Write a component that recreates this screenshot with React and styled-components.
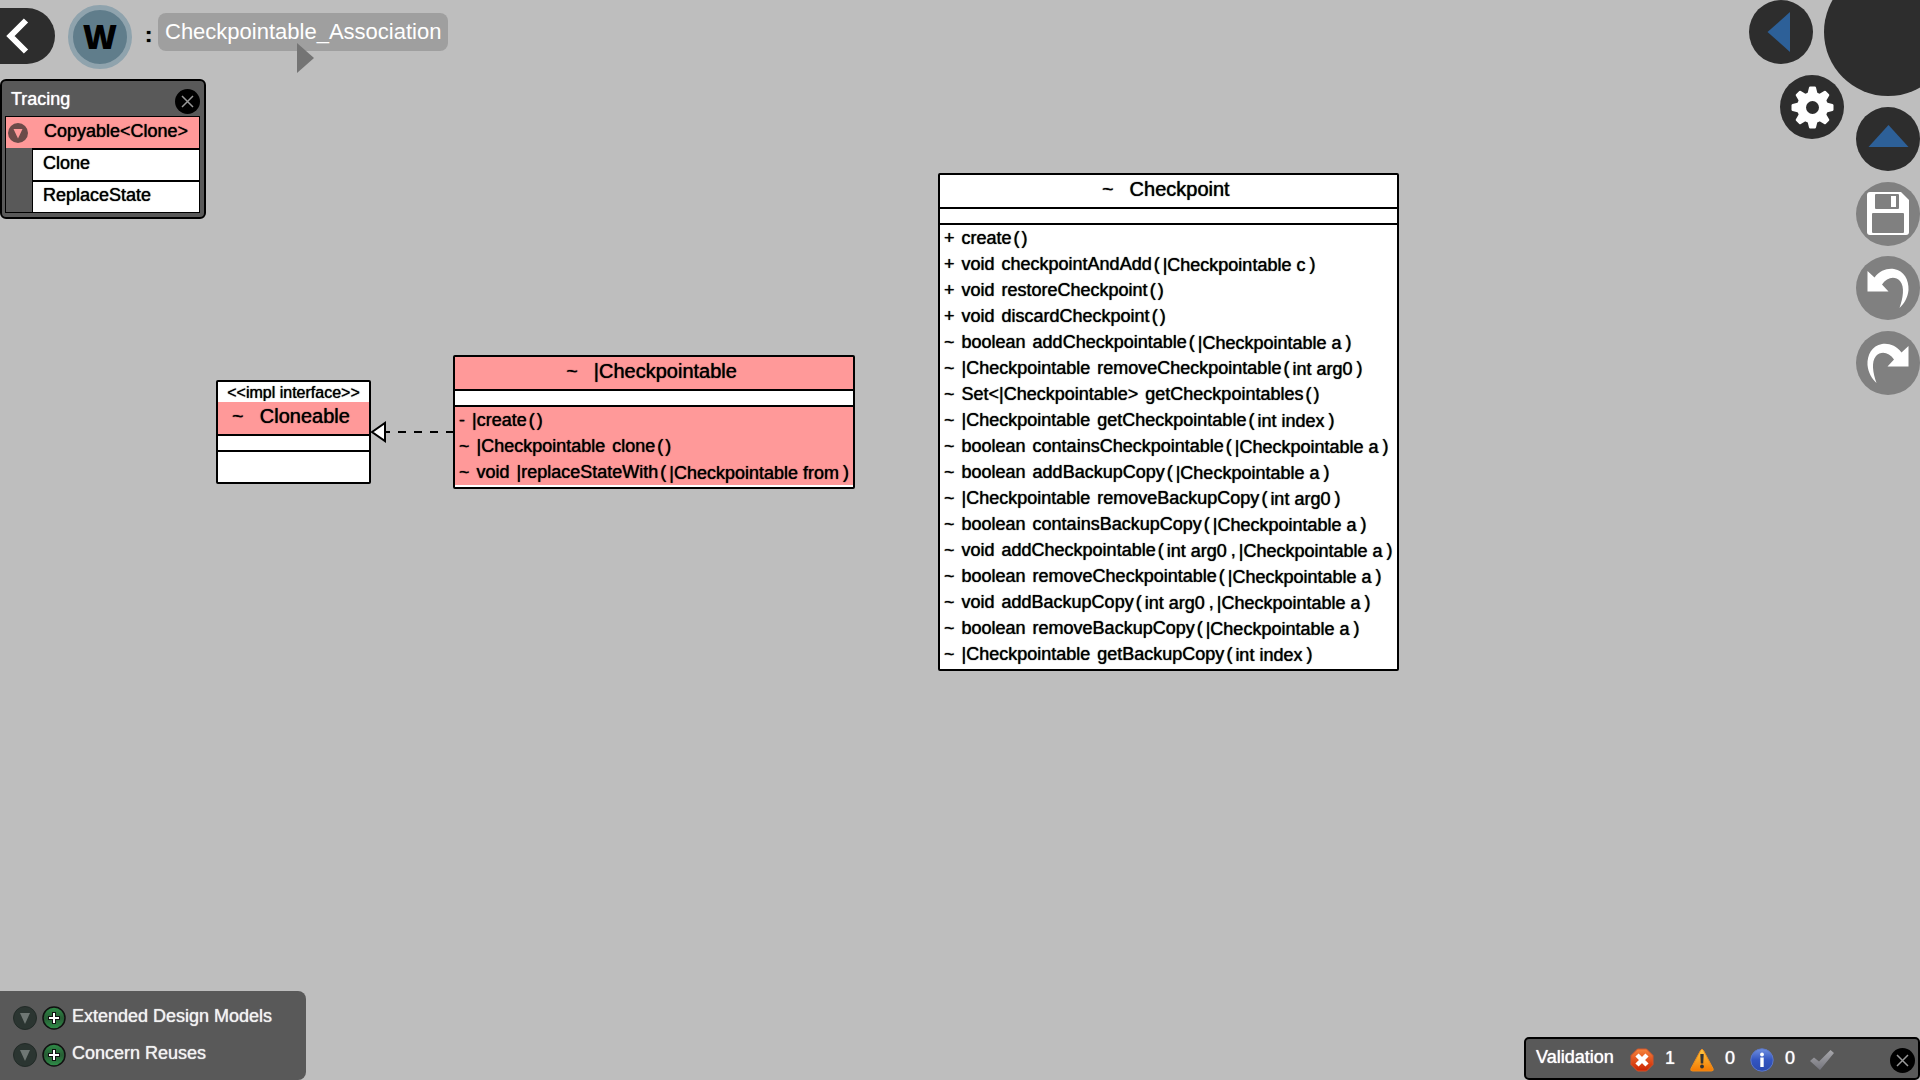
import React from 'react';
import styled, { createGlobalStyle, css } from 'styled-components';

const Global = createGlobalStyle`
  * { box-sizing: border-box; }
  html, body, #root { height: 100%; margin: 0; }
  body {
    background: #bebebe;
    color: #000;
    font: 18px/26px "Liberation Sans", Arial, sans-serif;
    text-shadow: 0 0 1px currentColor;
    overflow: hidden;
  }
  button { font: inherit; color: inherit; border: 0; padding: 0; background: none; cursor: pointer; }
  ul { list-style: none; margin: 0; padding: 0; }
  svg { display: block; }
`;

const Screen = styled.div`
  position: relative;
  min-height: 100%;
  display: flex;
  flex-direction: column;
  justify-content: space-between;
`;

const TopRow = styled.div`
  display: flex;
  justify-content: space-between;
  align-items: flex-start;
`;

const LeftColumn = styled.div`
  display: flex;
  flex-direction: column;
  align-items: flex-start;
  gap: 10px;
  padding-top: 5px;
`;

const Breadcrumb = styled.header`
  display: flex;
  align-items: center;
  height: 64px;
`;

const BackButton = styled.button`
  width: 55px;
  height: 56px;
  margin: 0 13px 2px 0;
  border-radius: 0 28px 28px 0;
  background: #2d2d2d;
`;

const ConcernButton = styled.button`
  display: grid;
  place-items: center;
  width: 64px;
  height: 64px;
  border: 5px solid #8fa3ad;
  border-radius: 50%;
  background: #607d8b;
  font: 900 33px/32px "Open Sans", "Liberation Sans", sans-serif;
`;

const Separator = styled.span`
  width: 26px;
  padding: 0 0 4px 13px;
  font: 700 22px/28px "Liberation Sans", Arial, sans-serif;
`;

const ModelName = styled.button`
  position: relative;
  height: 38px;
  margin-bottom: 10px;
  padding: 0 7px;
  border-radius: 8px;
  background: #9f9f9f;
  color: #fff;
  font-size: 22px;
  line-height: 36px;
`;

const Pointer = styled.svg`
  position: absolute;
  left: 139px;
  top: 30px;
`;

const TracingPanel = styled.section`
  width: 206px;
  padding: 0 4px 4px 3px;
  border: 2px solid #000;
  border-radius: 6px;
  background: #595959;
`;

const PanelHead = styled.div`
  display: flex;
  align-items: center;
  justify-content: space-between;
  height: 35px;
  padding-left: 6px;
  color: #fff;
`;

const PanelTitle = styled.h2`
  margin: 0;
  font-size: 18px;
  font-weight: 400;
  line-height: 34px;
`;

const RoundClose = styled.button`
  display: grid;
  place-items: center;
  width: 25px;
  height: 25px;
  margin-top: 6px;
  border-radius: 50%;
  background: #000;
`;

const TraceList = styled.ul`
  border: 1px solid #000;
`;

const TraceHead = styled.div`
  display: flex;
  align-items: center;
  gap: 16px;
  height: 31px;
  padding-left: 2px;
  background: #ff9999;
`;

const TraceName = styled.span`
  height: 31px;
  line-height: 28px;
`;

const TraceItems = styled.ul`
  padding-left: 26px;
`;

const TraceItem = styled.li`
  height: 32px;
  padding-left: 10px;
  border-left: 1px solid #000;
  border-top: 2px solid #000;
  background: #fff;
  line-height: 26px;
`;

const RadialMenu = styled.nav`
  position: relative;
  width: 171px;
  height: 396px;
  overflow: hidden;
`;

const Hub = styled.span`
  position: absolute;
  left: 75px;
  top: -32px;
  width: 128px;
  height: 128px;
  border-radius: 50%;
  background: #2d2d2d;
`;

const MenuButton = styled.button`
  position: absolute;
  left: ${(p) => p.$x}px;
  top: ${(p) => p.$y}px;
  width: 64px;
  height: 64px;
  border-radius: 50%;
  background: ${(p) => (p.$muted ? '#808080' : '#2d2d2d')};
`;

const Canvas = styled.main`
  position: absolute;
  inset: 0;
`;

const ClassNode = styled.article`
  position: absolute;
  left: ${(p) => p.$x}px;
  top: ${(p) => p.$y}px;
  min-width: 155px;
  border: 2px solid #000;
  border-radius: 2px;
  background: #fff;
`;

const Stereotype = styled.div`
  height: 20px;
  font-size: 16px;
  line-height: 22px;
  text-align: center;
`;

const traced = css`
  background: #ff9999;
`;

const ClassTitle = styled.h3`
  display: flex;
  justify-content: center;
  gap: 16px;
  height: 32px;
  margin: 0;
  padding-right: 5px;
  font-size: 20px;
  font-weight: 400;
  line-height: 28px;
  ${(p) => p.$traced && traced}
`;

const Attributes = styled.div`
  height: 16px;
  border-top: 2px solid #000;
`;

const Operations = styled.ul`
  min-height: 32px;
  padding-bottom: 2px;
  border-top: 2px solid #000;
`;

const Operation = styled.li`
  display: flex;
  gap: 7px;
  padding: 0 4px;
  white-space: nowrap;
  ${(p) => p.$traced && traced}
`;

const Signature = styled.span`
  display: flex;
  gap: 2px;
`;

const Param = styled.span`
  height: 26px;
  padding: 0 2px 0 1px;
  line-height: 28px;
`;

const Relation = styled.svg`
  position: absolute;
  left: 370px;
  top: 418px;
`;

const BottomRow = styled.footer`
  position: relative;
  display: flex;
  justify-content: space-between;
  align-items: flex-end;
`;

const ReusePanel = styled.section`
  display: flex;
  flex-direction: column;
  gap: 5px;
  width: 306px;
  height: 89px;
  padding: 11px 13px;
  border-radius: 0 8px 8px 0;
  background: #595959;
`;

const ReuseRow = styled.div`
  display: flex;
  align-items: center;
  gap: 5px;
  height: 32px;
  color: #f2f2f2;
  line-height: 28px;
`;

const ReuseLabel = styled.span`
  height: 32px;
  padding-left: 1px;
`;

const ValidationBar = styled.section`
  display: flex;
  align-items: center;
  width: 396px;
  height: 43px;
  padding: 0 3px 0 10px;
  border: 2px solid #000;
  border-radius: 5px;
  background: #595959;
  color: #fff;

  svg { margin-top: 2px; }
  button svg { margin-top: 0; }
`;

const ValidationTitle = styled.h2`
  width: 94px;
  height: 32px;
  margin: 0;
  font-size: 18px;
  font-weight: 400;
  line-height: 28px;
`;

const Tally = styled.span`
  display: flex;
  align-items: center;
  gap: 11px;
  width: 60px;
`;

const Count = styled.span`
  height: 32px;
  line-height: 30px;
`;

const BarClose = styled(RoundClose)`
  margin: 3px 0 0 auto;
`;

const CrossIcon = () => (
  <svg width="13" height="13" viewBox="0 0 13 13" stroke="#999" strokeWidth="1.5">
    <path d="M1 1 12 12M12 1 1 12" />
  </svg>
);

const UndoPath = () => (
  <path
    fill="#fff"
    d="M11.500 15 L18.500 21.500 C24 14.500 31 12 38 13 C48 14.500 53 24 52.500 34 C52 41 48 48 43.500 52 C47 42 49 31 44 25 C39 19.500 31 21 26 28.500 L32.500 35.500 L11.500 35.500 Z"
  />
);

const MENU = [
  { label: 'Collapse left', x: 0, y: 0, icon: <path fill="#2d6098" d="M18.500 32 41 12V52Z" /> },
  {
    label: 'Settings',
    x: 31,
    y: 75,
    icon: (
      <g transform="translate(32.500 32.500)" fill="#fff">
        <circle r="15.500" />
        {[0, 45, 90, 135, 180, 225, 270, 315].map((a) => (
          <path key={a} transform={`rotate(${a})`} d="M-5.500 -12 -3.500 -20Q-3.300 -21 -2.300 -21H2.300Q3.300 -21 3.500 -20L5.500 -12Z" />
        ))}
        <circle r="6.500" fill="#2d2d2d" />
      </g>
    ),
  },
  { label: 'Collapse up', x: 107, y: 107, icon: <path fill="#2d6098" d="M32.500 18 52.500 40H12.500Z" /> },
  {
    label: 'Save',
    x: 107,
    y: 182,
    muted: true,
    icon: (
      <g>
        <path fill="#fff" d="M14 10H45L53 18V50Q53 53 50 53H14Q11 53 11 50V13Q11 10 14 10Z" />
        <rect x="19" y="12" width="24" height="15" rx="1" fill="#808080" />
        <rect x="35" y="14" width="5" height="11" fill="#fff" />
        <rect x="16" y="31" width="32" height="20" rx="1" fill="#808080" />
      </g>
    ),
  },
  { label: 'Undo', x: 107, y: 256, muted: true, icon: <UndoPath /> },
  {
    label: 'Redo',
    x: 107,
    y: 331,
    muted: true,
    icon: (
      <g transform="matrix(-1 0 0 1 64 0)">
        <UndoPath />
      </g>
    ),
  },
];

const CLASSES = [
  {
    x: 216,
    y: 380,
    stereotype: '<<impl interface>>',
    name: 'Cloneable',
    traced: true,
    operations: [],
  },
  {
    x: 453,
    y: 355,
    name: '|Checkpointable',
    traced: true,
    operations: [
      ['-', '', '|create', []],
      ['~', '|Checkpointable', 'clone', []],
      ['~', 'void', '|replaceStateWith', ['|Checkpointable from']],
    ],
  },
  {
    x: 938,
    y: 173,
    name: 'Checkpoint',
    operations: [
      ['+', '', 'create', []],
      ['+', 'void', 'checkpointAndAdd', ['|Checkpointable c']],
      ['+', 'void', 'restoreCheckpoint', []],
      ['+', 'void', 'discardCheckpoint', []],
      ['~', 'boolean', 'addCheckpointable', ['|Checkpointable a']],
      ['~', '|Checkpointable', 'removeCheckpointable', ['int arg0']],
      ['~', 'Set<|Checkpointable>', 'getCheckpointables', []],
      ['~', '|Checkpointable', 'getCheckpointable', ['int index']],
      ['~', 'boolean', 'containsCheckpointable', ['|Checkpointable a']],
      ['~', 'boolean', 'addBackupCopy', ['|Checkpointable a']],
      ['~', '|Checkpointable', 'removeBackupCopy', ['int arg0']],
      ['~', 'boolean', 'containsBackupCopy', ['|Checkpointable a']],
      ['~', 'void', 'addCheckpointable', ['int arg0', '|Checkpointable a']],
      ['~', 'boolean', 'removeCheckpointable', ['|Checkpointable a']],
      ['~', 'void', 'addBackupCopy', ['int arg0', '|Checkpointable a']],
      ['~', 'boolean', 'removeBackupCopy', ['|Checkpointable a']],
      ['~', '|Checkpointable', 'getBackupCopy', ['int index']],
    ],
  },
];

function ClassBox({ model }) {
  return (
    <ClassNode $x={model.x} $y={model.y}>
      {model.stereotype && <Stereotype>{model.stereotype}</Stereotype>}
      <ClassTitle $traced={model.traced}>
        <span>~</span>
        <span>{model.name}</span>
      </ClassTitle>
      <Attributes />
      <Operations>
        {model.operations.map(([visibility, type, name, params], i) => (
          <Operation key={i} $traced={model.traced}>
            <span>{visibility}</span>
            {type && <span>{type}</span>}
            <Signature>
              <span>{name}</span>
              <span>(</span>
              {params.map((param, n) => (
                <React.Fragment key={param}>
                  {n > 0 && <span>,</span>}
                  <Param>{param}</Param>
                </React.Fragment>
              ))}
              <span>)</span>
            </Signature>
          </Operation>
        ))}
      </Operations>
    </ClassNode>
  );
}

const ExpandIcon = () => (
  <svg width="24" height="24" viewBox="0 0 24 24">
    <circle cx="12" cy="12" r="11.500" fill="#2b3531" stroke="#222a27" />
    <path fill="#6f7774" d="M7 7H17L12 18Z" />
  </svg>
);

const AddIcon = () => (
  <svg width="24" height="24" viewBox="0 0 24 24">
    <defs>
      <linearGradient id="add" x1="0" y1="0" x2="0" y2="1">
        <stop offset="0" stopColor="#2f8f49" />
        <stop offset="0.5" stopColor="#275c34" />
        <stop offset="1" stopColor="#2f8f49" />
      </linearGradient>
    </defs>
    <circle cx="12" cy="12" r="11" fill="url(#add)" stroke="#111" strokeWidth="1.5" />
    <path d="M12 6V18M6 12H18" stroke="#111" strokeWidth="4" />
    <path d="M12 7V17M7 12H17" stroke="#fff" strokeWidth="2" />
  </svg>
);

const ErrorIcon = () => (
  <svg width="24" height="24" viewBox="0 0 24 24">
    <defs>
      <linearGradient id="err" x1="0" y1="0" x2="0" y2="1">
        <stop offset="0" stopColor="#f5843c" />
        <stop offset="1" stopColor="#cc2200" />
      </linearGradient>
    </defs>
    <path fill="url(#err)" stroke="#d4542a" d="M7.500 1H16.500L23 7.500V16.500L16.500 23H7.500L1 16.500V7.500Z" />
    <path d="M7 7 17 17M17 7 7 17" stroke="#fff" strokeWidth="4.500" />
  </svg>
);

const WarningIcon = () => (
  <svg width="24" height="24" viewBox="0 0 24 24">
    <defs>
      <linearGradient id="warn" x1="0" y1="0" x2="0" y2="1">
        <stop offset="0" stopColor="#fcc944" />
        <stop offset="1" stopColor="#f57900" />
      </linearGradient>
    </defs>
    <path fill="url(#warn)" stroke="#f08c1a" strokeLinejoin="round" d="M10.500 2.500Q12 0 13.500 2.500L23 20.500Q24 23 21.500 23H2.500Q0 23 1 20.500Z" />
    <path fill="#333" d="M10.300 6H13.700L13.200 15.500H10.800Z" />
    <circle cx="12" cy="18.500" r="1.900" fill="#333" />
  </svg>
);

const InfoIcon = () => (
  <svg width="24" height="24" viewBox="0 0 24 24">
    <defs>
      <linearGradient id="info" x1="0" y1="0" x2="0" y2="1">
        <stop offset="0" stopColor="#6f8fe0" />
        <stop offset="0.5" stopColor="#3355c0" />
        <stop offset="1" stopColor="#2a49ae" />
      </linearGradient>
    </defs>
    <circle cx="12" cy="12" r="11.200" fill="url(#info)" stroke="#5c78c8" />
    <circle cx="12" cy="6.500" r="1.900" fill="#fff" />
    <path fill="#fff" d="M10.300 9.500H13.700V19H10.300Z" />
  </svg>
);

const CheckIcon = () => (
  <svg width="24" height="20" viewBox="0 0 24 20">
    <defs>
      <linearGradient id="check" x1="0" y1="0" x2="0" y2="1">
        <stop offset="0" stopColor="#a8a8ac" />
        <stop offset="1" stopColor="#75757d" />
      </linearGradient>
    </defs>
    <path fill="url(#check)" d="M0 11 4 7.500 9 11.500 20.500 0 24 3 10 20Z" />
  </svg>
);

export default function App() {
  return (
    <Screen>
      <Global />
      <Canvas>
        {CLASSES.map((model) => (
          <ClassBox key={model.name} model={model} />
        ))}
        <Relation width="84" height="28" viewBox="0 0 84 28">
          <path d="M16 14H84" stroke="#000" strokeWidth="2" strokeDasharray="8 8" strokeDashoffset="4" />
          <path d="M2 14 15 5V23Z" fill="#fff" stroke="#000" strokeWidth="2" />
        </Relation>
      </Canvas>

      <TopRow>
        <LeftColumn>
          <Breadcrumb>
            <BackButton aria-label="Back">
              <svg width="55" height="56" viewBox="0 0 55 56" fill="none" stroke="#fff" strokeWidth="6">
                <path d="M26 12.500 10.500 28 26 43.500" />
              </svg>
            </BackButton>
            <ConcernButton>W</ConcernButton>
            <Separator>:</Separator>
            <ModelName>
              Checkpointable_Association
              <Pointer width="18" height="30" viewBox="0 0 18 30">
                <path fill="#747474" d="M0 0 17 15 0 30Z" />
              </Pointer>
            </ModelName>
          </Breadcrumb>
          <TracingPanel>
            <PanelHead>
              <PanelTitle>Tracing</PanelTitle>
              <RoundClose aria-label="Close tracing">
                <CrossIcon />
              </RoundClose>
            </PanelHead>
            <TraceList>
              <li>
                <TraceHead>
                  <button aria-label="Collapse">
                    <svg width="20" height="20" viewBox="0 0 20 20">
                      <circle cx="10" cy="10" r="10" fill="#6b4b49" />
                      <path fill="#ff9999" d="M5.500 6H14.500L10 15.500Z" />
                    </svg>
                  </button>
                  <TraceName>{'Copyable<Clone>'}</TraceName>
                </TraceHead>
                <TraceItems>
                  <TraceItem>Clone</TraceItem>
                  <TraceItem>ReplaceState</TraceItem>
                </TraceItems>
              </li>
            </TraceList>
          </TracingPanel>
        </LeftColumn>
        <RadialMenu>
          <Hub />
          {MENU.map((item) => (
            <MenuButton key={item.label} aria-label={item.label} $x={item.x} $y={item.y} $muted={item.muted}>
              <svg width="64" height="64" viewBox="0 0 64 64">
                {item.icon}
              </svg>
            </MenuButton>
          ))}
        </RadialMenu>
      </TopRow>

      <BottomRow>
        <ReusePanel>
          {['Extended Design Models', 'Concern Reuses'].map((label) => (
            <ReuseRow key={label}>
              <button aria-label={`Expand ${label}`}>
                <ExpandIcon />
              </button>
              <button aria-label={`Add ${label}`}>
                <AddIcon />
              </button>
              <ReuseLabel>{label}</ReuseLabel>
            </ReuseRow>
          ))}
        </ReusePanel>
        <ValidationBar>
          <ValidationTitle>Validation</ValidationTitle>
          <Tally>
            <ErrorIcon />
            <Count>1</Count>
          </Tally>
          <Tally>
            <WarningIcon />
            <Count>0</Count>
          </Tally>
          <Tally>
            <InfoIcon />
            <Count>0</Count>
          </Tally>
          <CheckIcon />
          <BarClose aria-label="Close validation">
            <CrossIcon />
          </BarClose>
        </ValidationBar>
      </BottomRow>
    </Screen>
  );
}
